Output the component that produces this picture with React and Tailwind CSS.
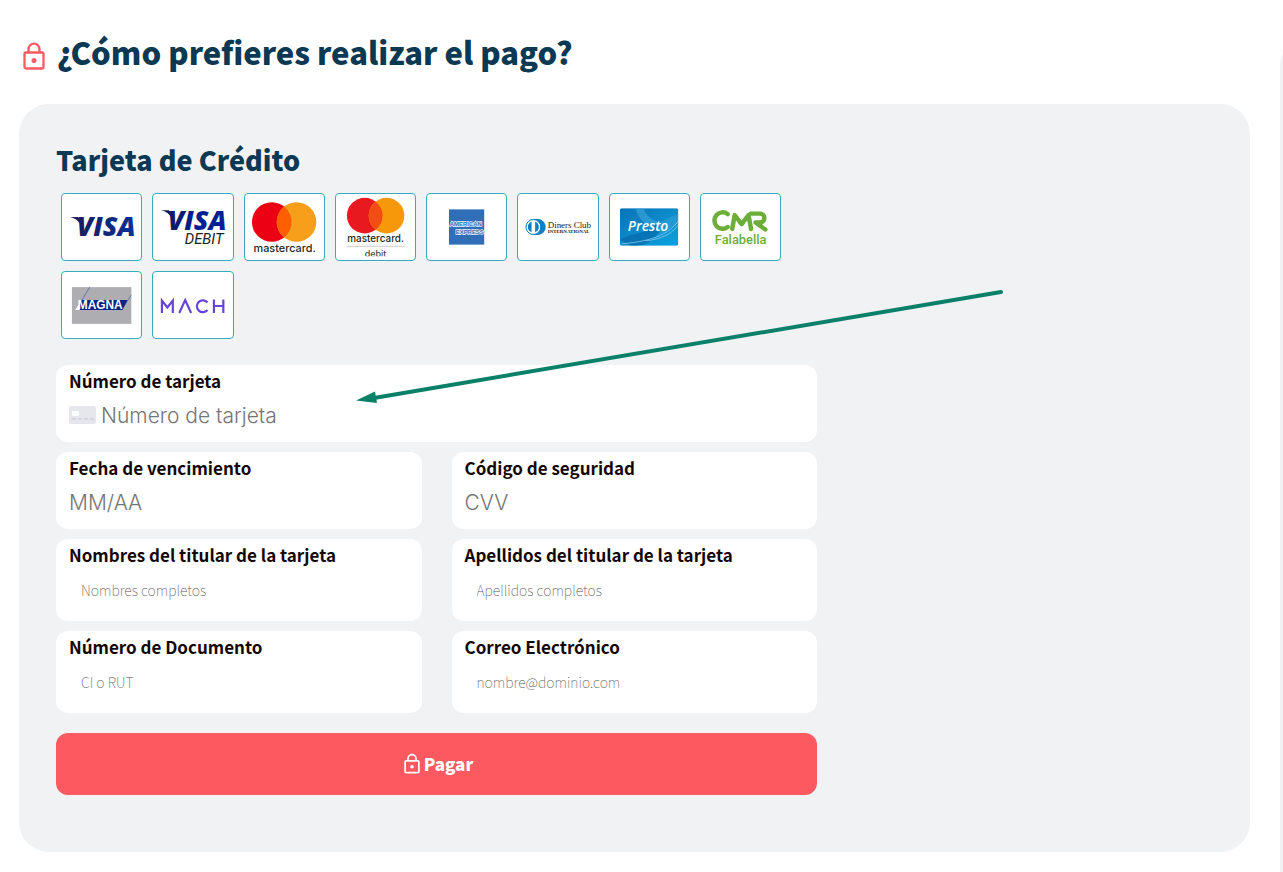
import React from "react";

function LockIcon({ className }) {
  return (
    <svg viewBox="0 0 22 28" fill="none" stroke="currentColor" className={className} aria-hidden="true">
      <rect x="1.500" y="10.500" width="19" height="16" rx="1.500" strokeWidth="2.300" />
      <path d="M5.500 10V7.200a5.500 5.500 0 0 1 11 0v2.800" strokeWidth="2.300" />
      <circle cx="11" cy="18.500" r="2.500" fill="currentColor" stroke="none" />
    </svg>
  );
}

function Logo({ label, children }) {
  return (
    <svg viewBox="0 0 80 66" className="h-[66px] w-20" role="img" aria-label={label}>
      {children}
    </svg>
  );
}

function Visa() {
  return (
    <Logo label="Visa">
      <defs>
        <linearGradient id="visa" x1="0" x2="1">
          <stop offset="0" stopColor="#1c1c5c" />
          <stop offset="1" stopColor="#03329c" />
        </linearGradient>
      </defs>
      <path d="M8 23h8l4 4-1 4C17 27 13 24 8 23z" fill="#1c1c5c" />
      <text x="15" y="42" fontSize="27" fontWeight="800" fontStyle="italic" fontFamily="Open Sans, sans-serif" fill="url(#visa)">VISA</text>
    </Logo>
  );
}

function VisaDebit() {
  return (
    <Logo label="Visa Debit">
      <defs>
        <linearGradient id="visa-debit" x1="0" x2="1">
          <stop offset="0" stopColor="#15195c" />
          <stop offset="0.5" stopColor="#001f91" />
        </linearGradient>
      </defs>
      <path d="M8 16h8l4 4-1 4C17 20 13 17 8 16z" fill="#15195c" />
      <text x="15" y="36" fontSize="27" fontWeight="800" fontStyle="italic" fontFamily="Open Sans, sans-serif" fill="url(#visa-debit)">VISA</text>
      <text x="32" y="50" fontSize="15" fontStyle="italic" fontFamily="Roboto, sans-serif" fill="#222">DEBIT</text>
    </Logo>
  );
}

function Mastercard() {
  return (
    <Logo label="Mastercard">
      <circle cx="27" cy="28" r="20" fill="#eb0014" />
      <circle cx="52" cy="28" r="20" fill="#f79e1b" />
      <path d="M39.500 12.400a20 20 0 0 1 0 31.200a20 20 0 0 1 0-31.200z" fill="#ff5f00" />
      <text x="40" y="58" textAnchor="middle" fontSize="11" fontWeight="500" fontFamily="Inter, sans-serif" fill="#231f20">mastercard.</text>
    </Logo>
  );
}

function MastercardDebit() {
  return (
    <Logo label="Mastercard Debit">
      <circle cx="29" cy="21.500" r="18" fill="#e8191f" />
      <circle cx="51" cy="21.500" r="18" fill="#f7980b" />
      <path d="M40 7.250a18 18 0 0 1 0 28.500a18 18 0 0 1 0-28.500z" fill="#f04e13" />
      <text x="40" y="48" textAnchor="middle" fontSize="10" fontWeight="500" fontFamily="Inter, sans-serif" fill="#231f20">mastercard.</text>
      <path d="M11 52.500h58" stroke="#ccc" />
      <svg x="0" y="54" width="80" height="8.500" viewBox="0 0 80 8.500">
        <text x="40" y="9" textAnchor="middle" fontSize="9" fontWeight="500" fontFamily="Inter, sans-serif" fill="#444">debit</text>
      </svg>
    </Logo>
  );
}

function Amex() {
  return (
    <Logo label="American Express">
      <svg x="22" y="15" width="36" height="36" viewBox="0 0 36 36">
        <rect width="36" height="36" fill="#306fb7" />
        <g fontFamily="Liberation Sans, sans-serif" fontSize="6" fontWeight="700" fill="#306fb7" stroke="#e6eef8" strokeWidth="1.400" paintOrder="stroke">
          <text x="1" y="17">AMERICAN</text>
          <text x="7" y="25">EXPRESS</text>
        </g>
      </svg>
    </Logo>
  );
}

function Diners() {
  return (
    <Logo label="Diners Club International">
      <rect x="8" y="25" width="20" height="16" rx="8" fill="#0a7fc4" />
      <circle cx="15.500" cy="33" r="7.500" fill="#fff" stroke="#0a7fc4" />
      <path d="M13.700 27.800a5.500 5.500 0 0 0 0 10.400zM17.300 27.800a5.500 5.500 0 0 1 0 10.400z" fill="#0a7fc4" />
      <text x="30" y="34" fontSize="9" fontFamily="Liberation Serif, serif" fill="#222">Diners Club</text>
      <text x="30" y="39" fontSize="5" fontWeight="700" fontFamily="Liberation Serif, serif" fill="#222">INTERNATIONAL</text>
    </Logo>
  );
}

function Presto() {
  return (
    <Logo label="Presto">
      <defs>
        <linearGradient id="presto" x1="0" y1="0" x2="1" y2="1">
          <stop offset="0" stopColor="#0672b8" />
          <stop offset="0.5" stopColor="#0d8bcb" />
          <stop offset="1" stopColor="#08a3de" />
        </linearGradient>
        <clipPath id="presto-card"><rect x="10" y="14" width="59" height="38" rx="2" /></clipPath>
      </defs>
      <g clipPath="url(#presto-card)">
        <rect x="10" y="14" width="59" height="38" fill="url(#presto)" />
        <path d="M34 14c2 8 8 12 18 15l-6 8C36 30 27 24 26 14z" fill="#41a6da" opacity=".6" />
        <path d="M69 20c-9 2-16 9-25 11l6 9c10-2 14-9 19-10z" fill="#2c9cd5" opacity=".7" />
        <path d="M10 46c12-8 24-4 37-16l3 8c-9 11-17 15-29 14z" fill="#0563a5" opacity=".6" />
        <path d="M12 50C33 48 57 44 69 27M36 47c17-2 26-7 33-16" fill="none" stroke="#9cd6f0" strokeWidth=".7" />
      </g>
      <text x="18" y="37" fontSize="14" fontWeight="600" fontStyle="italic" fontFamily="Open Sans, sans-serif" fill="#fff">Presto</text>
    </Logo>
  );
}

function Cmr() {
  return (
    <Logo label="CMR Falabella">
      <g fill="none" stroke="#6cae38" strokeWidth="4.500" strokeLinecap="round" strokeLinejoin="round">
        <path d="M27 20a8.300 8.300 0 1 0 0 13" />
        <path d="M31.500 35L34 21l7 9 7-9 2.500 14" />
        <path d="M50 19.500h9.500a4.500 4.500 0 0 1 0 9H55l10 7" />
      </g>
      <text x="40" y="50" textAnchor="middle" fontSize="13" fontWeight="500" fontFamily="Roboto, sans-serif" fill="#6cae38">Falabella</text>
    </Logo>
  );
}

function Magna() {
  return (
    <Logo label="Magna">
      <rect x="10" y="15" width="60" height="37" fill="#adadb2" />
      <path d="M20 28l8-13M62 35l8-12" stroke="#4a5c9c" strokeWidth=".7" />
      <path d="M20 28h46l-5 10H13z" fill="#0b2481" />
      <path d="M13 38l4-6 1 6z" fill="#fff" />
      <text x="16" y="37" fontSize="12" fontWeight="700" fontFamily="Liberation Sans, sans-serif" fill="#fff">MAGNA</text>
    </Logo>
  );
}

function Mach() {
  return (
    <Logo label="Mach">
      <g fill="none" stroke="#6644d5" strokeWidth="2.200">
        <path d="M9 41V28.500l5.500 7 5.500-7V41" />
        <path d="M26.500 41L32.500 28l6 13" />
        <path d="M55 30.500a6 6 0 1 0 0 7.500" />
        <path d="M61.500 27.500V41M71 27.500V41M61.500 34H71" />
      </g>
    </Logo>
  );
}

const brands = [Visa, VisaDebit, Mastercard, MastercardDebit, Amex, Diners, Presto, Cmr, Magna, Mach];

function Field({ id, label, placeholder, type = "text", large = false, icon, wide = false }) {
  return (
    <div className={`rounded-xl bg-white px-[13px] pt-[3px] ${large ? "h-[77px]" : "h-[82px]"} ${wide ? "col-span-2" : ""}`}>
      <label htmlFor={id} className="block text-[17px] leading-[26px] font-bold text-[#150606]">{label}</label>
      <div className={`flex items-center gap-[5px] ${large ? "h-[42px]" : "h-11 px-3"}`}>
        {icon}
        <input
          id={id}
          type={type}
          placeholder={placeholder}
          className={
            large
              ? "h-8 w-full bg-transparent font-['Inter',sans-serif] text-[21px] font-light outline-none placeholder:text-[#757575]"
              : "h-8 w-full bg-transparent text-[14px] font-thin outline-none placeholder:text-[#555555]"
          }
        />
      </div>
    </div>
  );
}

function CardIcon() {
  return (
    <svg viewBox="0 0 27 18" className="h-[18px] w-[27px] shrink-0" aria-hidden="true">
      <rect width="27" height="18" rx="2" fill="#e6e7ed" />
      <rect x="3" y="5" width="7" height="5" rx="1" fill="#fff" />
      <path d="M3 13h4m2 0h4m2 0h4m2 0h4" stroke="#d0d1dc" strokeWidth="1.500" />
    </svg>
  );
}

export default function App() {
  return (
    <div className="flex min-h-screen overflow-hidden bg-white font-['Noto_Sans_CJK_SC',sans-serif]">
      <main className="min-w-0 flex-1 pt-[30px] pb-5 pl-[19px]">
        <header className="flex h-11 items-center gap-3 pl-1">
          <LockIcon className="mt-2 h-7 w-[22px] text-[#fd5a62]" />
          <h1 className="text-[31px] leading-[44px] font-black text-[#0b3954]">¿Cómo prefieres realizar el pago?</h1>
        </header>

        <section className="relative mt-[30px] rounded-[30px] bg-[#f1f2f4] px-[37px] pt-[34px] pb-[57px]">
          <h2 className="text-[27px] leading-[43px] font-black text-[#0b3954]">Tarjeta de Crédito</h2>

          <ul className="mt-3 ml-[5px] grid max-w-[720px] grid-cols-8 gap-[10px]">
            {brands.map((Brand) => (
              <li key={Brand.name} className="flex h-[68px] items-center justify-center overflow-hidden rounded border border-[#35adbd] bg-white">
                <Brand />
              </li>
            ))}
          </ul>

          <form className="mt-[26px] max-w-[761px]" onSubmit={(e) => e.preventDefault()}>
            <div className="grid grid-cols-2 gap-x-[30px] gap-y-[10px]">
              <Field id="card" label="Número de tarjeta" placeholder="Número de tarjeta" large wide icon={<CardIcon />} />
              <Field id="expiry" label="Fecha de vencimiento" placeholder="MM/AA" large />
              <Field id="cvv" label="Código de seguridad" placeholder="CVV" large />
              <Field id="names" label="Nombres del titular de la tarjeta" placeholder="Nombres completos" />
              <Field id="surnames" label="Apellidos del titular de la tarjeta" placeholder="Apellidos completos" />
              <Field id="document" label="Número de Documento" placeholder="CI o RUT" />
              <Field id="email" type="email" label="Correo Electrónico" placeholder="nombre@dominio.com" />
            </div>
            <button type="submit" className="mt-5 flex h-[62px] w-full items-center justify-center gap-1 rounded-xl bg-[#fc5a60] pb-px pl-1 text-[17px] font-black text-white">
              <LockIcon className="h-[21px] w-4" />
              Pagar
            </button>
          </form>

          <svg viewBox="0 0 650 116" className="pointer-events-none absolute top-[184px] left-[336px] h-[116px] w-[650px]" aria-hidden="true">
            <path d="M19 110L646 4" stroke="#0b8068" strokeWidth="4" strokeLinecap="round" />
            <path d="M1 112.500L20 103.500L22 115z" fill="#0b8068" />
          </svg>
        </section>
      </main>

      <aside className="mt-9 ml-[30px] w-[3px] shrink-0 overflow-hidden">
        <div className="h-full w-20 rounded-tl-[30px] bg-[#f1f2f4]" />
      </aside>
    </div>
  );
}
